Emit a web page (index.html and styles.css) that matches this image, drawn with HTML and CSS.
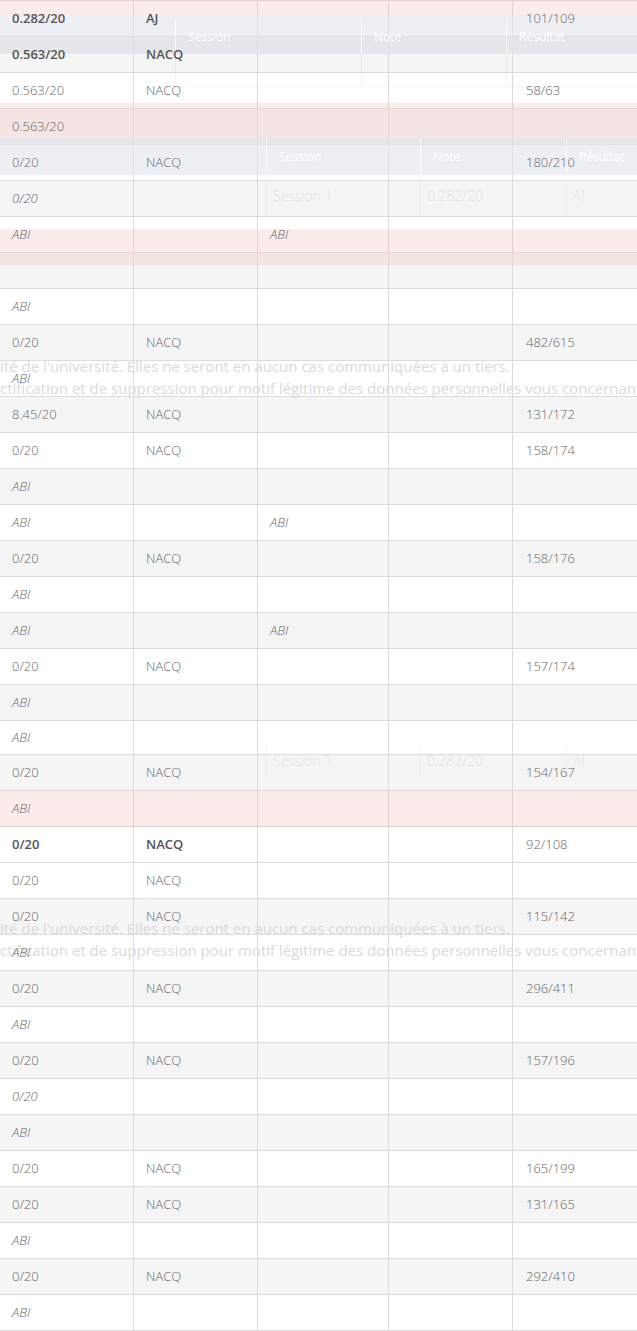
FILE: index.html
```html
<!DOCTYPE html>
<html lang="fr">
<head>
<meta charset="utf-8">
<title>Notes</title>
<link rel="stylesheet" href="styles.css">
</head>
<body>
<div class="page">
  <div class="grades">
    <div class="row strong"><div class="cell"><span>0.282/20</span></div><div class="cell"><span>AJ</span></div><div class="cell"></div><div class="cell"></div><div class="cell"><span class="light">101/109</span></div></div>
    <div class="row alt strong"><div class="cell"><span>0.563/20</span></div><div class="cell"><span>NACQ</span></div><div class="cell"></div><div class="cell"></div><div class="cell"></div></div>
    <div class="row"><div class="cell"><span>0.563/20</span></div><div class="cell"><span>NACQ</span></div><div class="cell"></div><div class="cell"></div><div class="cell"><span>58/63</span></div></div>
    <div class="row alt"><div class="cell"><span>0.563/20</span></div><div class="cell"></div><div class="cell"></div><div class="cell"></div><div class="cell"></div></div>
    <div class="row"><div class="cell"><span>0/20</span></div><div class="cell"><span>NACQ</span></div><div class="cell"></div><div class="cell"></div><div class="cell"><span>180/210</span></div></div>
    <div class="row alt"><div class="cell"><span class="it">0/20</span></div><div class="cell"></div><div class="cell"></div><div class="cell"></div><div class="cell"></div></div>
    <div class="row"><div class="cell"><span class="it">ABI</span></div><div class="cell"></div><div class="cell"><span class="it">ABI</span></div><div class="cell"></div><div class="cell"></div></div>
    <div class="row alt"><div class="cell"></div><div class="cell"></div><div class="cell"></div><div class="cell"></div><div class="cell"></div></div>
    <div class="row"><div class="cell"><span class="it">ABI</span></div><div class="cell"></div><div class="cell"></div><div class="cell"></div><div class="cell"></div></div>
    <div class="row alt"><div class="cell"><span>0/20</span></div><div class="cell"><span>NACQ</span></div><div class="cell"></div><div class="cell"></div><div class="cell"><span>482/615</span></div></div>
    <div class="row"><div class="cell"><span class="it">ABI</span></div><div class="cell"></div><div class="cell"></div><div class="cell"></div><div class="cell"></div></div>
    <div class="row alt"><div class="cell"><span>8.45/20</span></div><div class="cell"><span>NACQ</span></div><div class="cell"></div><div class="cell"></div><div class="cell"><span>131/172</span></div></div>
    <div class="row"><div class="cell"><span>0/20</span></div><div class="cell"><span>NACQ</span></div><div class="cell"></div><div class="cell"></div><div class="cell"><span>158/174</span></div></div>
    <div class="row alt"><div class="cell"><span class="it">ABI</span></div><div class="cell"></div><div class="cell"></div><div class="cell"></div><div class="cell"></div></div>
    <div class="row"><div class="cell"><span class="it">ABI</span></div><div class="cell"></div><div class="cell"><span class="it">ABI</span></div><div class="cell"></div><div class="cell"></div></div>
    <div class="row alt"><div class="cell"><span>0/20</span></div><div class="cell"><span>NACQ</span></div><div class="cell"></div><div class="cell"></div><div class="cell"><span>158/176</span></div></div>
    <div class="row"><div class="cell"><span class="it">ABI</span></div><div class="cell"></div><div class="cell"></div><div class="cell"></div><div class="cell"></div></div>
    <div class="row alt"><div class="cell"><span class="it">ABI</span></div><div class="cell"></div><div class="cell"><span class="it">ABI</span></div><div class="cell"></div><div class="cell"></div></div>
    <div class="row"><div class="cell"><span>0/20</span></div><div class="cell"><span>NACQ</span></div><div class="cell"></div><div class="cell"></div><div class="cell"><span>157/174</span></div></div>
    <div class="row alt"><div class="cell"><span class="it">ABI</span></div><div class="cell"></div><div class="cell"></div><div class="cell"></div><div class="cell"></div></div>
    <div class="row short"><div class="cell"><span class="it">ABI</span></div><div class="cell"></div><div class="cell"></div><div class="cell"></div><div class="cell"></div></div>
    <div class="row alt"><div class="cell"><span>0/20</span></div><div class="cell"><span>NACQ</span></div><div class="cell"></div><div class="cell"></div><div class="cell"><span>154/167</span></div></div>
    <div class="row"><div class="cell"><span class="it">ABI</span></div><div class="cell"></div><div class="cell"></div><div class="cell"></div><div class="cell"></div></div>
    <div class="row strong"><div class="cell"><span>0/20</span></div><div class="cell"><span>NACQ</span></div><div class="cell"></div><div class="cell"></div><div class="cell"><span class="light">92/108</span></div></div>
    <div class="row"><div class="cell"><span>0/20</span></div><div class="cell"><span>NACQ</span></div><div class="cell"></div><div class="cell"></div><div class="cell"></div></div>
    <div class="row alt"><div class="cell"><span>0/20</span></div><div class="cell"><span>NACQ</span></div><div class="cell"></div><div class="cell"></div><div class="cell"><span>115/142</span></div></div>
    <div class="row"><div class="cell"><span class="it">ABI</span></div><div class="cell"></div><div class="cell"></div><div class="cell"></div><div class="cell"></div></div>
    <div class="row alt"><div class="cell"><span>0/20</span></div><div class="cell"><span>NACQ</span></div><div class="cell"></div><div class="cell"></div><div class="cell"><span>296/411</span></div></div>
    <div class="row"><div class="cell"><span class="it">ABI</span></div><div class="cell"></div><div class="cell"></div><div class="cell"></div><div class="cell"></div></div>
    <div class="row alt"><div class="cell"><span>0/20</span></div><div class="cell"><span>NACQ</span></div><div class="cell"></div><div class="cell"></div><div class="cell"><span>157/196</span></div></div>
    <div class="row"><div class="cell"><span class="it">0/20</span></div><div class="cell"></div><div class="cell"></div><div class="cell"></div><div class="cell"></div></div>
    <div class="row alt"><div class="cell"><span class="it">ABI</span></div><div class="cell"></div><div class="cell"></div><div class="cell"></div><div class="cell"></div></div>
    <div class="row"><div class="cell"><span>0/20</span></div><div class="cell"><span>NACQ</span></div><div class="cell"></div><div class="cell"></div><div class="cell"><span>165/199</span></div></div>
    <div class="row alt"><div class="cell"><span>0/20</span></div><div class="cell"><span>NACQ</span></div><div class="cell"></div><div class="cell"></div><div class="cell"><span>131/165</span></div></div>
    <div class="row"><div class="cell"><span class="it">ABI</span></div><div class="cell"></div><div class="cell"></div><div class="cell"></div><div class="cell"></div></div>
    <div class="row alt"><div class="cell"><span>0/20</span></div><div class="cell"><span>NACQ</span></div><div class="cell"></div><div class="cell"></div><div class="cell"><span>292/410</span></div></div>
    <div class="row"><div class="cell"><span class="it">ABI</span></div><div class="cell"></div><div class="cell"></div><div class="cell"></div><div class="cell"></div></div>
  </div>

  <!-- repaint artefact bands -->
  <div class="band pink b-top"></div>
  <div class="band blue b-h1a"></div>
  <div class="band blue-dark b-h1b"></div>
  <div class="band pink b-p1"></div>
  <div class="band blue-dark b-h2a"></div>
  <div class="band blue b-h2b"></div>
  <div class="band pink b-p2"></div>
  <div class="band pink b-p3"></div>

  <!-- ghost tables -->
  <div class="ghost g1">
    <div class="ghead"><div class="gc">Session</div><div class="gc">Note</div><div class="gc">Résultat</div></div>
    <div class="gbody"><div class="gc"></div><div class="gc"></div><div class="gc"></div></div>
  </div>
  <div class="ghost g2">
    <div class="ghead"><div class="gc">Session</div><div class="gc">Note</div><div class="gc">Résultat</div></div>
    <div class="gbody"><div class="gc">Session 1</div><div class="gc">0.282/20</div><div class="gc">AJ</div></div>
  </div>
  <div class="ghost g3">
    <div class="gbody"><div class="gc">Session 1</div><div class="gc">0.282/20</div><div class="gc">AJ</div></div>
  </div>

  <!-- ghost paragraphs -->
  <div class="ghost-text t1">
    <p>ité de l'université. Elles ne seront en aucun cas communiquées à un tiers.</p>
    <p>ctification et de suppression pour motif légitime des données personnelles vous concernant.</p>
  </div>
  <div class="ghost-text t2">
    <p>ité de l'université. Elles ne seront en aucun cas communiquées à un tiers.</p>
    <p>ctification et de suppression pour motif légitime des données personnelles vous concernant.</p>
  </div>
</div>
</body>
</html>
```
FILE: styles.css
```css
* { box-sizing: border-box; }
html, body { margin: 0; padding: 0; background: #fff; }
body { font-family: "Open Sans", "DejaVu Sans", sans-serif; }

.page {
  position: relative;
  width: 637px;
  height: 1331px;
  overflow: hidden;
}

.grades {
  width: 637px;
  border-top: 1px solid #dcdcdc;
}

.row {
  display: grid;
  grid-template-columns: 134px 124px 131px 124px 124px;
  height: 36px;
  border-bottom: 1px solid #dcdcdc;
  background: #fff;
  font-size: 13px;
  font-weight: 300;
  color: #666;
}
.row.alt { background: #f5f5f5; }
.row.short { height: 34px; }
.row.strong { font-weight: 600; color: #555; }

.cell {
  display: flex;
  align-items: center;
  padding-left: 12px;
  padding-bottom: 2px;
  border-right: 1px solid #dcdcdc;
  white-space: nowrap;
}
.cell:last-child { border-right: none; padding-left: 13px; }
.cell span { position: relative; z-index: 3; }
.cell .it { font-style: italic; }
.cell .light { font-weight: 300; color: #666; }

/* artefact bands */
.band {
  position: absolute;
  left: 0;
  width: 637px;
  z-index: 1;
}
.pink { background: rgba(245, 190, 190, 0.3); }
.blue { background: rgba(226, 229, 238, 0.6); }
.blue-dark { background: rgba(222, 224, 230, 0.7); }
.b-top { top: 0; height: 16px; }
.b-h1a { top: 16px; height: 20px; }
.b-h1b { top: 36px; height: 18px; }
.b-p1 { top: 103px; height: 35px; }
.b-h2a { top: 138px; height: 6px; }
.b-h2b { top: 144px; height: 31px; }
.b-p2 { top: 229px; height: 36px; }
.b-p3 { top: 790px; height: 37px; }

/* ghost tables */
.ghost {
  position: absolute;
  z-index: 2;
  font-size: 12px;
}
.ghead, .gbody { display: grid; }
.ghead .gc {
  display: flex;
  align-items: center;
  padding-left: 12px;
  color: #fff;
  border-left: 1px solid rgba(255, 255, 255, 0.75);
}
.gbody .gc {
  display: flex;
  align-items: center;
  padding-left: 6px;
  font-size: 14px;
  font-weight: 300;
  color: #e4e4e4;
  border-left: 1px solid rgba(0, 0, 0, 0.035);
}

.g1 { top: 18px; left: 175px; width: 462px; }
.g1 .ghead, .g1 .gbody { grid-template-columns: 186px 145px 131px; }
.g1 .ghead { height: 36px; }
.g1 .gbody { height: 34px; border-bottom: 1px solid rgba(0, 0, 0, 0.03); }
.g1 .gbody .gc { border-left-color: rgba(0, 0, 0, 0.05); }

.g2 { top: 138px; left: 266px; width: 371px; }
.g2 .ghead, .g2 .gbody { grid-template-columns: 154px 146px 71px; }
.g2 .ghead { height: 37px; }
.g2 .gbody { height: 41px; }

.g3 { top: 742px; left: 266px; width: 371px; }
.g3 .gbody { grid-template-columns: 154px 146px 71px; height: 36px; }

/* ghost paragraphs */
.ghost-text {
  position: absolute;
  left: 0;
  width: 637px;
  z-index: 1;
  font-size: 15px;
  line-height: 22px;
  color: #dadada;
  white-space: nowrap;
  overflow: hidden;
}
.ghost-text p { margin: 0; }
.t1 { top: 355px; }
.t2 { top: 917px; }
```
